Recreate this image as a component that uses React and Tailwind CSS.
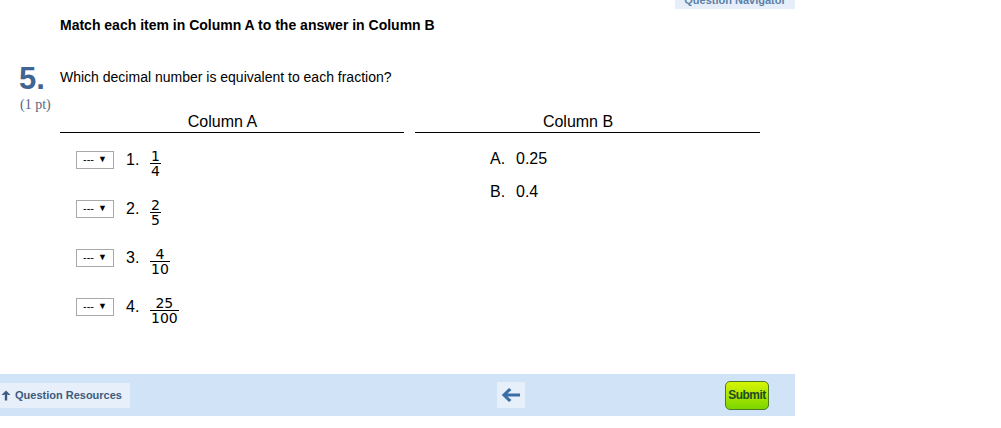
import React from 'react';

const rows = [
  { n: '1.', top: '1', bottom: '4' },
  { n: '2.', top: '2', bottom: '5' },
  { n: '3.', top: '4', bottom: '10' },
  { n: '4.', top: '25', bottom: '100' },
];

const answers = [
  { l: 'A.', v: '0.25' },
  { l: 'B.', v: '0.4' },
];

const Fraction = ({ top, bottom }) => (
  <div className="flex flex-col items-center font-['DejaVu_Sans',sans-serif] text-[14px] leading-[13px] text-black">
    <span className="px-[1px]">{top}</span>
    <span className="border-t border-black px-[1px] pt-[1px]">{bottom}</span>
  </div>
);

const App = () => {
  return (
    <div className="w-[1001px] h-[428px] bg-white font-['Liberation_Sans',Arial,sans-serif] text-black overflow-hidden">
      <div className="h-[374px]">
        {/* top navigator tab, cut off by the window edge */}
        <div className="w-[795px] flex justify-end">
          <div className="w-[120px] h-[9px] bg-[#e6eff9] overflow-hidden flex justify-center">
            <span className="text-[11px] font-bold text-[#5c80a8] leading-[12px] mt-[-6px]">Question Navigator</span>
          </div>
        </div>

        <div className="pl-[60px] pt-[8px] text-[14px] font-bold leading-[16px]">
          Match each item in Column A to the answer in Column B
        </div>

        {/* question */}
        <div className="flex mt-[32px]">
          <div className="w-[60px] pl-[19px] flex flex-col">
            <span className="text-[31px] font-bold leading-[28px] text-[#3f6491]">5.</span>
            <span className="font-['Liberation_Serif',serif] text-[14px] leading-[16px] text-[#56667f] mt-[4px] ml-[1px]">(1 pt)</span>
          </div>
          <div className="flex flex-col">
            <div className="text-[14px] leading-[16px] mt-[4px]">Which decimal number is equivalent to each fraction?</div>

            <div className="flex gap-[11px] mt-[28px]">
              {/* column A */}
              <div className="w-[344px] flex flex-col">
                <div className="text-center text-[16px] leading-[18px] border-b border-black pb-[1px] pr-[19px]">Column A</div>
                <div className="flex flex-col gap-[30px] mt-[17px] pl-[16px]">
                  {rows.map((r) => (
                    <div key={r.n} className="flex items-center h-[19px]">
                      <div className="w-[38px] h-[18px] border border-[#a9a9a9] flex items-center justify-center gap-[4px] text-[11px] leading-[11px] bg-white">
                        <span>---</span>
                        <span className="text-[9px]">▼</span>
                      </div>
                      <span className="ml-[12px] w-[24px] text-[16px] leading-[18px]">{r.n}</span>
                      <div className="mt-[8px] flex">
                        <Fraction top={r.top} bottom={r.bottom} />
                      </div>
                    </div>
                  ))}
                </div>
              </div>

              {/* column B */}
              <div className="w-[345px] flex flex-col">
                <div className="text-center text-[16px] leading-[18px] border-b border-black pb-[1px] pr-[19px]">Column B</div>
                <div className="flex flex-col gap-[15px] mt-[17px] pl-[75px]">
                  {answers.map((a) => (
                    <div key={a.l} className="flex text-[16px] leading-[18px]">
                      <span className="w-[26px]">{a.l}</span>
                      <span>{a.v}</span>
                    </div>
                  ))}
                </div>
              </div>
            </div>
          </div>
        </div>
      </div>

      {/* footer bar */}
      <div className="w-[795px] h-[42px] bg-[#d1e4f7] flex items-center pr-[26px]">
        <div className="h-[25px] w-[130px] bg-[#e7f0fa] flex items-center gap-[4px] pl-[1px]">
          <svg width="10" height="11" viewBox="0 0 10 11">
            <path d="M5 0.5 L9.5 5 L7 5 L6.2 4.2 L6.2 10.5 L3.8 10.5 L3.8 4.2 L3 5 L0.5 5 Z" fill="#3d5a80" />
          </svg>
          <span className="text-[11px] font-bold text-[#3d5a80]">Question Resources</span>
        </div>
        <div className="w-[28px] h-[26px] ml-[367px] bg-[#e7f0fa] flex items-center justify-center">
          <svg width="20" height="16" viewBox="0 0 20 16">
            <path d="M8 1 L10.5 3 L6.5 6.5 L19 6.5 L19 9.5 L6.5 9.5 L10.5 13 L8 15 L0.8 8 Z" fill="#3b6ea6" />
          </svg>
        </div>
        <div className="flex-1" />
        <button className="h-[29px] w-[44px] rounded-[5px] border border-[#4f7a2a] bg-gradient-to-b from-[#d6f500] to-[#7ad600] text-[12px] font-bold tracking-[-0.5px] text-[#1f4a22] flex items-center justify-center">
          Submit
        </button>
      </div>
    </div>
  );
};

export default App;
